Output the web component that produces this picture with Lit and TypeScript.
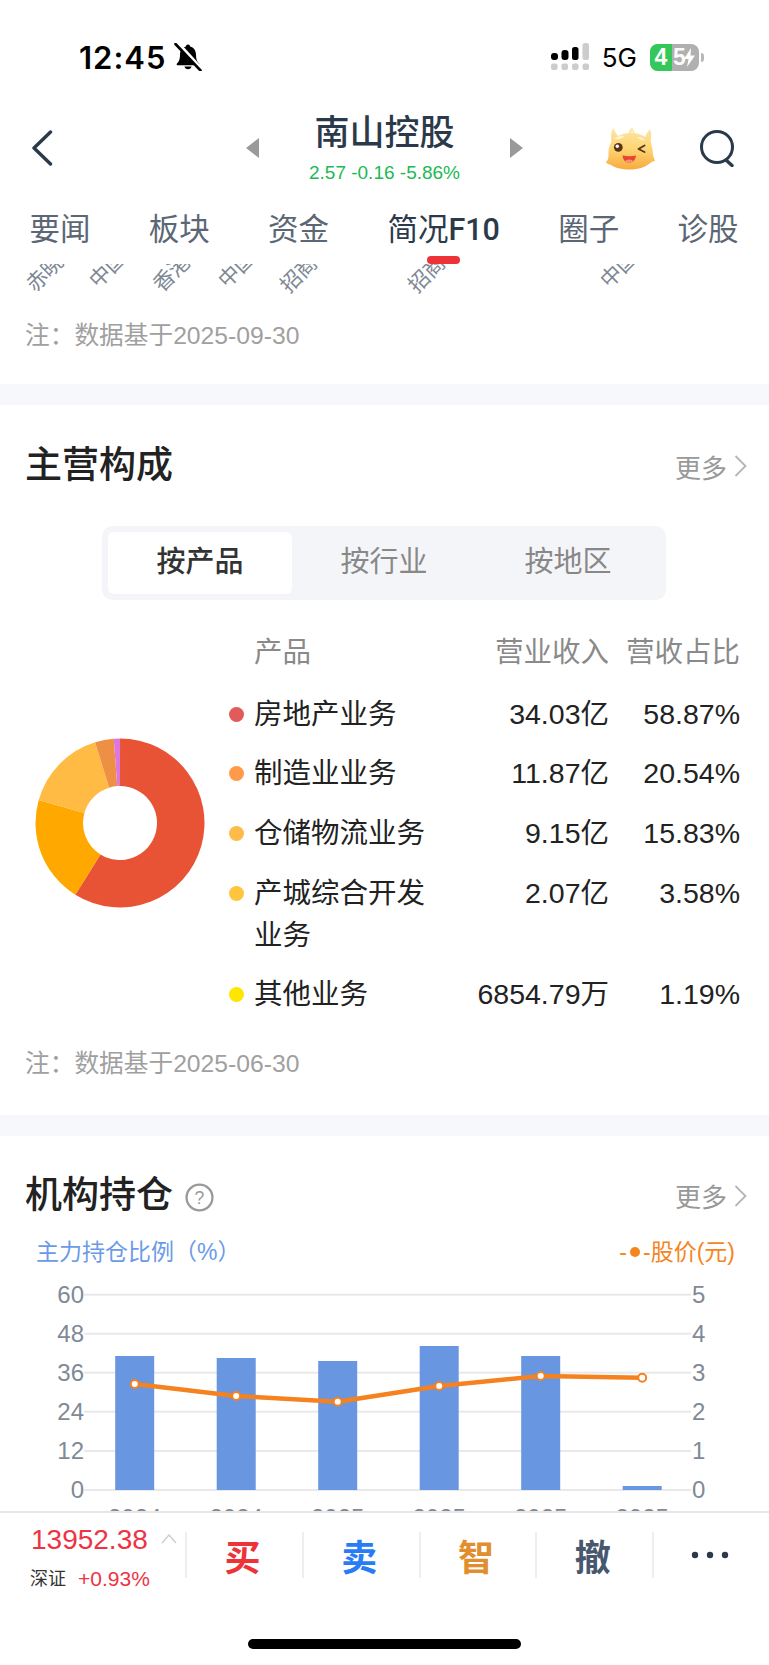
import { html, svg, css, LitElement } from "lit";
import { customElement } from "lit/decorators.js";

const TABS = ["要闻", "板块", "资金", "简况", "圈子", "诊股"];
const SEGMENTS = ["按产品", "按行业", "按地区"];

// clipped axis labels of the chart above the fold: [x, y, text]
const CLIPPED_LABELS: [number, number, string][] = [
  [35, 29, "赤晓"],
  [98, 25, "中国"],
  [162, 29, "香港"],
  [227, 25, "中国"],
  [289, 30, "招商"],
  [417, 30, "招商"],
  [609, 25, "中国"],
];

const ROWS = [
  { dot: "#e25b5b", name: "房地产业务", revenue: "34.03亿", pct: "58.87%" },
  { dot: "#ff9a4a", name: "制造业业务", revenue: "11.87亿", pct: "20.54%" },
  { dot: "#ffbb4a", name: "仓储物流业务", revenue: "9.15亿", pct: "15.83%" },
  { dot: "#ffc53d", name: "产城综合开发业务", revenue: "2.07亿", pct: "3.58%" },
  { dot: "#ffe600", name: "其他业务", revenue: "6854.79万", pct: "1.19%" },
];

const PIE = [
  { value: 58.87, color: "#e95335" },
  { value: 20.54, color: "#ffa800" },
  { value: 15.83, color: "#ffbb44" },
  { value: 3.58, color: "#ee9044" },
  { value: 1.19, color: "#dd77dd" },
];

const BARS = [
  { x: 134.7, top: 89, year: "2024", price: 117 },
  { x: 236.2, top: 91, year: "2024", price: 129 },
  { x: 337.7, top: 94, year: "2025", price: 134.7 },
  { x: 439.2, top: 79, year: "2025", price: 119 },
  { x: 540.7, top: 89, year: "2025", price: 109 },
  { x: 642.2, top: 219, year: "2025", price: 110.7 },
];

const GRID_Y = [27.7, 66.7, 105.7, 144.7, 184, 223];
const LEFT_AXIS = ["60", "48", "36", "24", "12", "0"];
const RIGHT_AXIS = ["5", "4", "3", "2", "1", "0"];

function arcPath(cx: number, cy: number, r: number, ir: number, from: number, to: number) {
  const pt = (rad: number, pct: number) => {
    const a = (pct / 100) * Math.PI * 2;
    return `${cx + rad * Math.sin(a)} ${cy - rad * Math.cos(a)}`;
  };
  const large = to - from > 50 ? 1 : 0;
  return `M${pt(r, from)} A${r} ${r} 0 ${large} 1 ${pt(r, to)} L${pt(ir, to)} A${ir} ${ir} 0 ${large} 0 ${pt(ir, from)} Z`;
}

@customElement("app-root")
export class AppRoot extends LitElement {
  static styles = css`
    :host {
      display: flex;
      flex-direction: column;
      height: 1665px;
      overflow: hidden;
      background: #ffffff;
      color: #222222;
      font-family: "Liberation Sans", "Noto Sans CJK SC", sans-serif;
    }

    .status {
      flex: none;
      height: 110px;
      box-sizing: border-box;
      padding: 4px 65px 0 79px;
      display: flex;
      align-items: center;
      color: #000000;
    }

    .time {
      font-family: Inter, "Liberation Sans", sans-serif;
      font-size: 31px;
      font-weight: 600;
      letter-spacing: 1px;
      width: 95px;
    }

    .status-right {
      margin-left: auto;
      display: flex;
      align-items: center;
    }

    .net {
      font-family: Inter, "Liberation Sans", sans-serif;
      font-size: 26px;
      margin: 0 13px 0 12px;
    }

    .battery {
      position: relative;
      width: 49px;
      height: 27px;
      border-radius: 8px;
      overflow: hidden;
      display: flex;
      background: #b0b0b0;
      color: #ffffff;
      font-size: 23px;
      font-weight: 700;
      line-height: 27px;
    }

    .battery-fill {
      width: 22px;
      background: #34c759;
      text-align: center;
    }

    .battery-rest {
      padding-left: 1px;
      opacity: 0.95;
    }

    .battery svg {
      position: absolute;
      right: 3px;
      top: 4px;
    }

    .nub {
      width: 3px;
      height: 9px;
      margin-left: 2px;
      background: #b8b8b8;
      border-radius: 0 3px 3px 0;
    }

    .nav {
      flex: none;
      display: grid;
      grid-template-columns: 246px 277px 246px;
      align-items: center;
      height: 76px;
      padding-bottom: 14px;
    }

    .nav-left {
      padding-left: 31px;
      display: flex;
      align-items: center;
    }

    .nav-mid {
      display: flex;
      align-items: center;
      justify-content: space-between;
    }

    .stack {
      display: flex;
      flex-direction: column;
      align-items: center;
    }

    .stock-name {
      font-size: 35px;
      line-height: 40px;
      color: #2b3a4a;
      font-weight: 500;
    }

    .stock-price {
      margin-top: 9px;
      font-size: 19px;
      line-height: 22px;
      color: #1db954;
    }

    .nav-right {
      display: flex;
      justify-content: flex-end;
      align-items: center;
      gap: 44px;
      padding-right: 33px;
    }

    .tabs {
      flex: none;
      display: flex;
      gap: 58.3px;
      padding: 8px 0 0 29.5px;
      font-size: 30.5px;
      line-height: 42px;
      color: #5c6775;
    }

    .tab {
      display: flex;
      flex-direction: column;
      align-items: center;
      white-space: nowrap;
    }

    .tab.active {
      color: #2b3a4a;
    }

    .tab-code {
      font-family: Roboto, "Liberation Sans", sans-serif;
      font-weight: 500;
    }

    .tab-bar {
      width: 33px;
      height: 8px;
      margin-top: 5px;
      border-radius: 4px;
      background: #ee3338;
    }

    .tab-gap {
      height: 13px;
    }

    main {
      flex: 1;
      min-height: 0;
      overflow: hidden;
    }

    .clipped {
      display: block;
      width: 769px;
      height: 30px;
    }

    .clipped text {
      font-size: 21px;
      fill: #7d8793;
    }

    .note {
      margin: 24px 0 30px 25px;
      font-size: 24.7px;
      line-height: 36px;
      color: #a0a0a0;
    }

    .note.second {
      margin: 22px 0 33px 25px;
    }

    .band {
      height: 21px;
      background: #f7f8fc;
    }

    .head {
      display: flex;
      align-items: center;
      height: 50px;
      margin-top: 36px;
      padding: 0 22px 0 25px;
    }

    .head.second {
      margin-top: 35px;
    }

    .head h2 {
      margin: 0;
      font-size: 37px;
      line-height: 50px;
      font-weight: 500;
      color: #222222;
    }

    .help {
      margin: 4px 0 0 12px;
    }

    .more {
      margin-left: auto;
      display: flex;
      align-items: center;
      gap: 7px;
      font-size: 26px;
      color: #999999;
    }

    .segment {
      width: 552px;
      margin: 35px 0 0 102px;
      padding: 6px;
      display: flex;
      background: #f4f5f9;
      border-radius: 10px;
    }

    .segment div {
      flex: 1;
      height: 62px;
      line-height: 60px;
      text-align: center;
      font-size: 29px;
      color: #888888;
      border-radius: 6px;
    }

    .segment .on {
      background: #ffffff;
      color: #333333;
      font-weight: 500;
    }

    .split {
      display: flex;
      align-items: flex-start;
      margin-top: 31px;
    }

    .pie-wrap {
      flex: none;
      width: 229px;
      padding: 107px 0 0 35px;
      box-sizing: border-box;
    }

    .pie-wrap svg {
      display: block;
    }

    .table {
      width: 511px;
      font-size: 28.5px;
      line-height: 42px;
    }

    .row {
      display: grid;
      grid-template-columns: 25px 181px 1fr 131px;
      padding: 8.8px 0;
    }

    .row.header {
      padding: 0 0 11px;
      color: #8a8a8a;
    }

    .num {
      text-align: right;
      white-space: nowrap;
    }

    .dot {
      width: 15px;
      height: 15px;
      margin-top: 14px;
      border-radius: 50%;
    }

    .legend {
      display: flex;
      justify-content: space-between;
      margin-top: 16px;
      padding: 0 34px 0 36px;
      font-size: 23px;
      line-height: 30px;
    }

    .legend-left {
      color: #6b9ae8;
    }

    .legend-right {
      display: flex;
      align-items: center;
      color: #f5861f;
    }

    .legend-dot {
      width: 10px;
      height: 10px;
      margin: 0 3px 0 3px;
      border-radius: 50%;
      background: #f5861f;
    }

    .chart {
      display: block;
      width: 769px;
      height: 244px;
    }

    .chart text {
      font-size: 24px;
      fill: #7f8a96;
    }

    footer {
      flex: none;
      height: 154px;
      box-sizing: border-box;
      border-top: 2px solid #e6e6e6;
      display: flex;
      flex-direction: column;
      background: #ffffff;
    }

    .dock {
      display: flex;
      align-items: flex-start;
      padding-top: 10px;
    }

    .quote {
      flex: none;
      width: 185px;
      box-sizing: border-box;
      padding-left: 31px;
      position: relative;
    }

    .quote-price {
      font-size: 28px;
      line-height: 34px;
      color: #ee3344;
    }

    .quote-sub {
      display: flex;
      align-items: center;
      gap: 12px;
      margin-top: 8px;
      margin-left: -1px;
      line-height: 28px;
      font-size: 18px;
      color: #333333;
    }

    .quote-sub span {
      font-size: 21px;
      color: #ee3344;
    }

    .caret {
      position: absolute;
      left: 161px;
      top: 11px;
    }

    .action {
      flex: 1;
      height: 46px;
      margin-top: 9px;
      padding-right: 4px;
      box-sizing: border-box;
      border-left: 2px solid #eeeeee;
      display: flex;
      align-items: center;
      justify-content: center;
      font-size: 36px;
      font-weight: 700;
    }

    .home {
      width: 273px;
      height: 10px;
      margin: auto auto 16px;
      border-radius: 5px;
      background: #000000;
    }
  `;

  private renderStatus() {
    return html`
      <div class="status">
        <span class="time">12:45</span>
        <svg width="28" height="28" viewBox="0 0 28 28">
          <path d="M14 1.500c-1.300 0-2 .9-2.100 2C7.500 4.600 6 8.500 6 12c0 4-1 6.500-3 8.500-.7.8-.3 1.800.8 1.800h20.400c1.100 0 1.500-1 .8-1.800-2-2-3-4.500-3-8.500 0-3.500-1.500-7.400-5.900-8.500C16 2.400 15.300 1.500 14 1.500Z" fill="#000" />
          <path d="M10.500 23.500a3.600 3.600 0 0 0 7 0Z" fill="#000" />
          <path d="M3.500 0 27 26" stroke="#fff" stroke-width="4" />
          <path d="M1.500 1 26.500 27.500" stroke="#000" stroke-width="2.600" stroke-linecap="round" />
        </svg>
        <div class="status-right">
          <svg width="40" height="28" viewBox="0 0 40 28">
            <rect x="1" y="10" width="7" height="7" rx="3" fill="#000" />
            <rect x="11.500" y="7" width="7" height="10" rx="3" fill="#000" />
            <rect x="22" y="4" width="6.500" height="13" rx="2.500" fill="#000" />
            <rect x="32.500" y="0" width="6.500" height="17" rx="2.500" fill="#ccc" />
            ${[1, 11.5, 22, 32.5].map((x) => svg`<rect x=${x} y="20.500" width="6.500" height="6.500" rx="2" fill="#ccc" />`)}
          </svg>
          <span class="net">5G</span>
          <div class="battery">
            <div class="battery-fill">4</div>
            <div class="battery-rest">5</div>
            <svg width="13" height="19" viewBox="0 0 13 19"><path d="M8 0 1 11h4.500L4 19l8-11.500H7.500Z" fill="#fff" /></svg>
          </div>
          <div class="nub"></div>
        </div>
      </div>
    `;
  }

  private renderMascot() {
    return html`
      <svg width="50" height="46" viewBox="0 0 50 46">
        <defs>
          <linearGradient id="fur" x1="0" y1="0" x2="0" y2="1">
            <stop offset="0" stop-color="#fde6a6" />
            <stop offset="0.5" stop-color="#fdd574" />
            <stop offset="1" stop-color="#f8ab3e" />
          </linearGradient>
        </defs>
        <path
          d="M8 3C10 6 11 9 13 11 17 9 21 8 24 8 24 6 25 4 27 2.500 28 4 29 6 29.500 8 33 8.500 37 10 40 12 41.500 9 43 6 45 4 46.500 8 46.500 12 45.500 16 47 21 48 26 48 30L50 36C48.500 36 47.500 36.500 46 37.500 41 42 33 44.500 25 44.500 17 44.500 9 42.500 5 39.500 3 39.500 1.500 38.500 1 37 3 35 3.500 33 3.500 30 3 25 4.500 20 6.500 16 5.500 12 6 7 8 3Z"
          fill="url(#fur)"
        />
        <path d="M9 14c3-3 7-4 11-3-2.500 2.500-7 4-11 3ZM32 12c3-.5 6 .5 8 3-3 .5-6-.5-8-3ZM26 8c0-1.500.5-3 1.200-4 .5 1.500.7 3 .6 4.500Z" fill="#fff3cd" />
        <circle cx="13.300" cy="22.300" r="4.400" fill="#5b3418" />
        <circle cx="12.300" cy="21.300" r="1.700" fill="#fff" />
        <path d="M39.500 20.500 33.500 24l6 3" fill="none" stroke="#5b3418" stroke-width="1.900" stroke-linecap="round" stroke-linejoin="round" />
        <path d="M17.500 30.500c4.500 1 9 1 13.500 0-.5 4.500-3 7-6.800 7s-6.200-2.500-6.700-7Z" fill="#e8452f" />
        <ellipse cx="24.200" cy="36" rx="3.500" ry="1.500" fill="#f8917a" />
      </svg>
    `;
  }

  private renderNav() {
    return html`
      <div class="nav">
        <div class="nav-left">
          <svg width="22" height="36" viewBox="0 0 22 36">
            <path d="M19.500 2 3 18l16.500 16" fill="none" stroke="#2b3a4a" stroke-width="3.400" stroke-linecap="round" stroke-linejoin="round" />
          </svg>
        </div>
        <div class="nav-mid">
          <svg width="13" height="20" viewBox="0 0 13 20"><path d="M13 0v20L0 10Z" fill="#9a9a9a" /></svg>
          <div class="stack">
            <div class="stock-name">南山控股</div>
            <div class="stock-price">2.57 -0.16 -5.86%</div>
          </div>
          <svg width="13" height="20" viewBox="0 0 13 20"><path d="M0 0v20l13-10Z" fill="#9a9a9a" /></svg>
        </div>
        <div class="nav-right">
          ${this.renderMascot()}
          <svg width="37" height="38" viewBox="0 0 37 38">
            <circle cx="18" cy="18" r="15.500" fill="none" stroke="#2b3a4a" stroke-width="3" />
            <path d="M27 31l6 5.500" stroke="#2b3a4a" stroke-width="3.400" stroke-linecap="round" />
          </svg>
        </div>
      </div>
    `;
  }

  private renderMore() {
    return html`
      <div class="more">
        更多
        <svg width="13" height="22" viewBox="0 0 13 22"><path d="M1.500 1 11.500 11 1.500 21" fill="none" stroke="#b5b5b5" stroke-width="1.800" /></svg>
      </div>
    `;
  }

  private renderPie() {
    let acc = 0;
    return html`
      <svg width="170" height="170" viewBox="0 0 170 170">
        ${PIE.map((slice) => {
          const from = acc;
          acc += slice.value;
          return svg`<path d=${arcPath(85, 85, 84.5, 37, from, acc)} fill=${slice.color} />`;
        })}
      </svg>
    `;
  }

  private renderChart() {
    const line = BARS.map((b) => `${b.x},${b.price}`).join(" ");
    return html`
      <svg class="chart" viewBox="0 0 769 244">
        ${GRID_Y.map((y) => svg`<rect x="84" y=${y - 1} width="607" height="2" fill="#e9e9e9" />`)}
        ${BARS.map((b) => svg`<rect x=${b.x - 19.500} y=${b.top} width="39" height=${223 - b.top} fill="#6896e0" />`)}
        <polyline points=${line} fill="none" stroke="#f5821f" stroke-width="4.500" stroke-linejoin="round" />
        ${BARS.map((b) => svg`<circle cx=${b.x} cy=${b.price} r="4" fill="#fff" stroke="#f5821f" stroke-width="2" />`)}
        ${LEFT_AXIS.map((t, i) => svg`<text x="84" y=${GRID_Y[i] + 8} text-anchor="end">${t}</text>`)}
        ${RIGHT_AXIS.map((t, i) => svg`<text x="692" y=${GRID_Y[i] + 8}>${t}</text>`)}
        ${BARS.map((b) => svg`<text x=${b.x} y="259" text-anchor="middle">${b.year}</text>`)}
      </svg>
    `;
  }

  render() {
    return html`
      ${this.renderStatus()} ${this.renderNav()}
      <div class="tabs">
        ${TABS.map((t, i) => html`
          <div class="tab ${i === 3 ? "active" : ""}">
            <div>${t}${i === 3 ? html`<span class="tab-code">F10</span>` : ""}</div>
            ${i === 3 ? html`<div class="tab-bar"></div>` : html`<div class="tab-gap"></div>`}
          </div>
        `)}
      </div>
      <main>
        <svg class="clipped" viewBox="0 0 769 30">
          ${CLIPPED_LABELS.map(([x, y, t]) => svg`<text transform="translate(${x} ${y}) rotate(-45)">${t}</text>`)}
        </svg>
        <div class="note">注：数据基于2025-09-30</div>
        <div class="band"></div>

        <div class="head">
          <h2>主营构成</h2>
          ${this.renderMore()}
        </div>
        <div class="segment">
          ${SEGMENTS.map((s, i) => html`<div class=${i === 0 ? "on" : ""}>${s}</div>`)}
        </div>
        <div class="split">
          <div class="pie-wrap">${this.renderPie()}</div>
          <div class="table">
            <div class="row header">
              <div></div>
              <div>产品</div>
              <div class="num">营业收入</div>
              <div class="num">营收占比</div>
            </div>
            ${ROWS.map((r) => html`
              <div class="row">
                <div class="dot" style="background:${r.dot}"></div>
                <div>${r.name}</div>
                <div class="num">${r.revenue}</div>
                <div class="num">${r.pct}</div>
              </div>
            `)}
          </div>
        </div>
        <div class="note second">注：数据基于2025-06-30</div>
        <div class="band"></div>

        <div class="head second">
          <h2>机构持仓</h2>
          <svg class="help" width="29" height="29" viewBox="0 0 28 28">
            <circle cx="14" cy="14" r="12.500" fill="none" stroke="#999" stroke-width="2.200" />
            <text x="14" y="20" text-anchor="middle" font-size="17" fill="#999">?</text>
          </svg>
          ${this.renderMore()}
        </div>
        <div class="legend">
          <div class="legend-left">主力持仓比例（%）</div>
          <div class="legend-right">-<span class="legend-dot"></span>-股价(元)</div>
        </div>
        ${this.renderChart()}
      </main>
      <footer>
        <div class="dock">
          <div class="quote">
            <div class="quote-price">13952.38</div>
            <svg class="caret" width="16" height="10" viewBox="0 0 16 10"><path d="M1 9l7-8 7 8" fill="none" stroke="#cfcfcf" stroke-width="1.500" /></svg>
            <div class="quote-sub">深证<span>+0.93%</span></div>
          </div>
          <div class="action" style="color:#ee3338">买</div>
          <div class="action" style="color:#2a7cf6">卖</div>
          <div class="action" style="color:#e08e2e">智</div>
          <div class="action" style="color:#47586e">撤</div>
          <div class="action">
            <svg width="38" height="8" viewBox="0 0 38 8">
              <circle cx="4" cy="4" r="3.200" fill="#2b3a4a" />
              <circle cx="19" cy="4" r="3.200" fill="#2b3a4a" />
              <circle cx="34" cy="4" r="3.200" fill="#2b3a4a" />
            </svg>
          </div>
        </div>
        <div class="home"></div>
      </footer>
    `;
  }
}
